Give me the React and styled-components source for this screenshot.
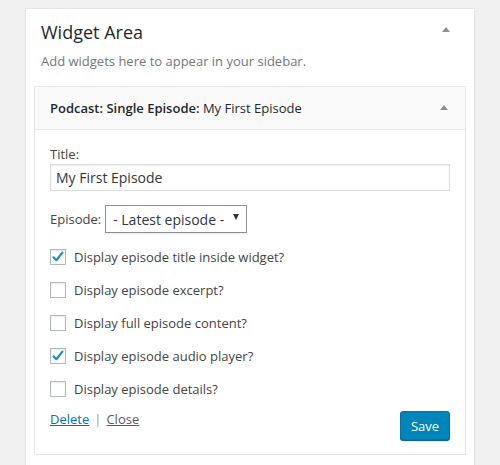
import React from "react";
import styled, { createGlobalStyle } from "styled-components";

const Global = createGlobalStyle`
  html, body { margin: 0; padding: 0; background: #f1f1f1; }
  body { font-family: "Open Sans", "Liberation Sans", sans-serif; color: #444; font-size: 13px; overflow: hidden; }
  * { box-sizing: border-box; }
`;

const Page = styled.div`
  height: 465px;
  padding: 8px 0 0 25px;
  overflow: hidden;
`;

const Panel = styled.section`
  width: 450px;
  background: #fff;
  border: 1px solid #e5e5e5;
  box-shadow: 0 1px 1px rgba(0, 0, 0, 0.04);
  padding: 11px 8px 40px;
`;

const PanelHead = styled.div`
  display: flex;
  align-items: flex-start;
  justify-content: space-between;
  padding: 0 16px 0 7px;
`;

const PanelTitle = styled.h2`
  margin: 0;
  font-size: 18px;
  line-height: 24px;
  font-weight: 400;
  color: #23282d;
`;

const Arrow = styled.span`
  display: block;
  width: 0;
  height: 0;
  border-left: 4px solid transparent;
  border-right: 4px solid transparent;
  border-bottom: 5px solid ${(p) => p.$color || "#8d9196"};
  margin-top: ${(p) => p.$top || 0}px;
`;

const Description = styled.p`
  margin: 8px 0 0;
  padding: 0 7px;
  font-size: 13px;
  line-height: 18px;
  color: #72777c;
`;

const Widget = styled.div`
  margin-top: 16px;
  border: 1px solid #e5e5e5;
  background: #fff;
`;

const WidgetHead = styled.div`
  height: 43px;
  padding: 0 17px 0 15px;
  display: flex;
  align-items: center;
  justify-content: space-between;
  background: #fafafa;
  border-bottom: 1px solid #e5e5e5;
  font-size: 13px;
  line-height: 18px;
  color: #23282d;
`;

const WidgetName = styled.span`
  font-weight: 600;
`;

const InTitle = styled.span`
  font-weight: 400;
`;

const WidgetBody = styled.div`
  padding: 15px 15px 14px;
  display: flex;
  flex-direction: column;
`;

const Label = styled.label`
  display: block;
  font-size: 13px;
  line-height: 18px;
  color: #444;
`;

const TextInput = styled.input`
  margin-top: 1px;
  width: 100%;
  height: 27px;
  padding: 0 5px;
  border: 1px solid #ddd;
  box-shadow: inset 0 1px 2px rgba(0, 0, 0, 0.07);
  font-family: inherit;
  font-size: 14px;
  color: #32373c;
  outline: none;
`;

const SelectRow = styled.div`
  margin-top: 14px;
  display: flex;
  align-items: center;
  gap: 4px;
`;

const FakeSelect = styled.div`
  width: 142px;
  height: 28px;
  border: 1px solid #8c8f94;
  box-shadow: 0 1px 1px rgba(0, 0, 0, 0.08);
  display: flex;
  align-items: center;
  justify-content: space-between;
  padding: 0 7px 0 7px;
  font-size: 14px;
  color: #32373c;
  background: #fff;
`;

const Caret = styled.span`
  width: 0;
  height: 0;
  border-left: 3.5px solid transparent;
  border-right: 3.5px solid transparent;
  border-top: 6px solid #333;
  margin-top: -4px;
`;

const Checks = styled.div`
  margin-top: 14px;
  display: flex;
  flex-direction: column;
  gap: 13px;
`;

const CheckRow = styled.label`
  display: flex;
  align-items: center;
  gap: 8px;
  height: 20px;
  font-size: 13px;
  color: #444;
`;

const Box = styled.span`
  width: 16px;
  height: 16px;
  border: 1px solid #b4b9be;
  background: #fff;
  box-shadow: inset 0 1px 2px rgba(0, 0, 0, 0.1);
  display: flex;
  align-items: center;
  justify-content: center;
  flex-shrink: 0;
`;

const Footer = styled.div`
  margin-top: 11px;
  display: flex;
  justify-content: space-between;
  align-items: flex-start;
`;

const Links = styled.div`
  font-size: 13px;
  line-height: 18px;
  color: #ccc;
`;

const Link = styled.a`
  color: ${(p) => p.$color};
  text-decoration: underline;
  cursor: pointer;
`;

const Sep = styled.span`
  margin: 0 5px;
  color: #999;
`;

const SaveButton = styled.button`
  margin-top: 1px;
  width: 50px;
  height: 29px;
  background: #0085ba;
  border: 1px solid #0073aa;
  border-radius: 3px;
  box-shadow: 0 1px 0 #006799;
  color: #fff;
  font-family: inherit;
  font-size: 13px;
  padding: 0;
`;

const Check = () => (
  <svg width="14" height="14" viewBox="0 0 14 14">
    <path d="M2.5 7.3 L5.3 10.2 L11.4 2.6" fill="none" stroke="#1e8cbe" strokeWidth="2.2" strokeLinecap="round" strokeLinejoin="round" />
  </svg>
);

const options = [
  { label: "Display episode title inside widget?", on: true },
  { label: "Display episode excerpt?", on: false },
  { label: "Display full episode content?", on: false },
  { label: "Display episode audio player?", on: true },
  { label: "Display episode details?", on: false },
];

export default function App() {
  return (
    <>
      <Global />
      <Page>
        <Panel>
          <PanelHead>
            <PanelTitle>Widget Area</PanelTitle>
            <Arrow $top={7} />
          </PanelHead>
          <Description>Add widgets here to appear in your sidebar.</Description>
          <Widget>
            <WidgetHead>
              <span>
                <WidgetName>Podcast: Single Episode:</WidgetName>
                <InTitle> My First Episode</InTitle>
              </span>
              <Arrow $top={-2} />
            </WidgetHead>
            <WidgetBody>
              <Label>Title:</Label>
              <TextInput defaultValue="My First Episode" />
              <SelectRow>
                <Label>Episode:</Label>
                <FakeSelect>
                  <span>- Latest episode -</span>
                  <Caret />
                </FakeSelect>
              </SelectRow>
              <Checks>
                {options.map((o) => (
                  <CheckRow key={o.label}>
                    <Box>{o.on && <Check />}</Box>
                    {o.label}
                  </CheckRow>
                ))}
              </Checks>
              <Footer>
                <Links>
                  <Link $color="#0073aa">Delete</Link>
                  <Sep>|</Sep>
                  <Link $color="#555d66">Close</Link>
                </Links>
                <SaveButton>Save</SaveButton>
              </Footer>
            </WidgetBody>
          </Widget>
        </Panel>
      </Page>
    </>
  );
}
